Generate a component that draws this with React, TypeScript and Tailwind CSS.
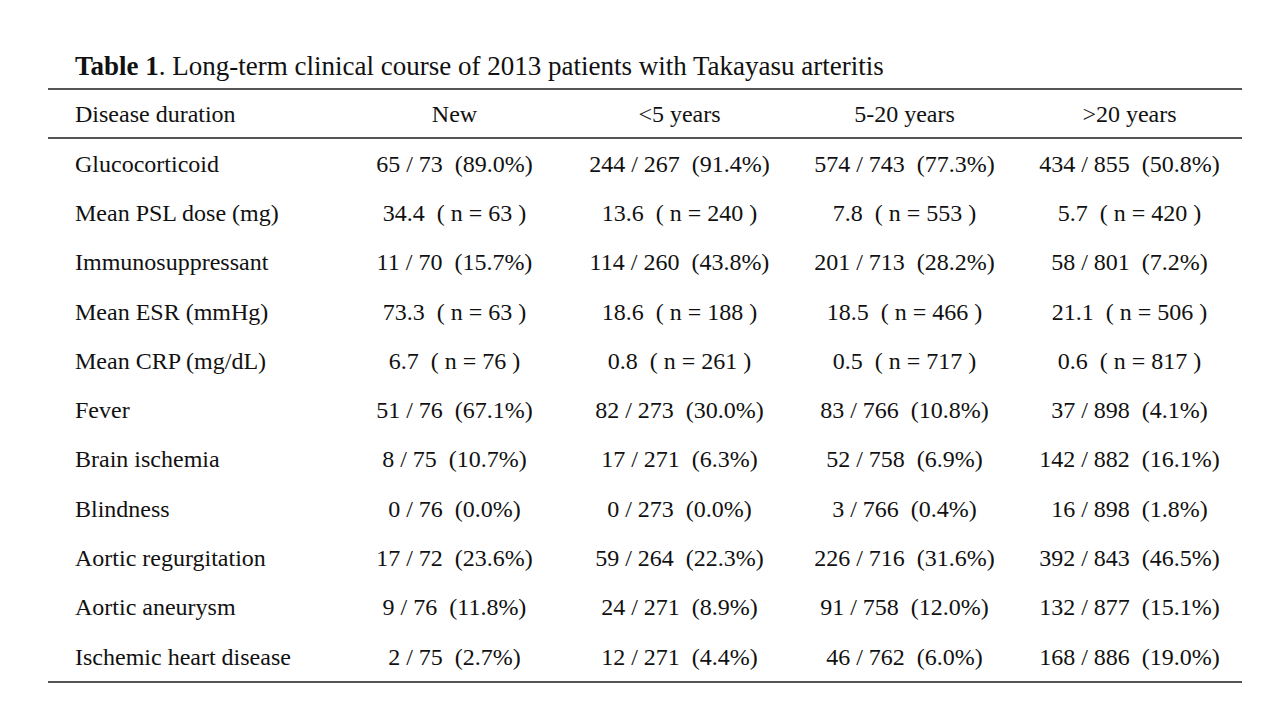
import React from 'react';

type Row = { label: string; cells: string[] };

const headers = ['New', '<5 years', '5-20 years', '>20 years'];

const rows: Row[] = [
  { label: 'Glucocorticoid', cells: ['65 / 73  (89.0%)', '244 / 267  (91.4%)', '574 / 743  (77.3%)', '434 / 855  (50.8%)'] },
  { label: 'Mean PSL dose (mg)', cells: ['34.4  ( n = 63 )', '13.6  ( n = 240 )', '7.8  ( n = 553 )', '5.7  ( n = 420 )'] },
  { label: 'Immunosuppressant', cells: ['11 / 70  (15.7%)', '114 / 260  (43.8%)', '201 / 713  (28.2%)', '58 / 801  (7.2%)'] },
  { label: 'Mean ESR (mmHg)', cells: ['73.3  ( n = 63 )', '18.6  ( n = 188 )', '18.5  ( n = 466 )', '21.1  ( n = 506 )'] },
  { label: 'Mean CRP (mg/dL)', cells: ['6.7  ( n = 76 )', '0.8  ( n = 261 )', '0.5  ( n = 717 )', '0.6  ( n = 817 )'] },
  { label: 'Fever', cells: ['51 / 76  (67.1%)', '82 / 273  (30.0%)', '83 / 766  (10.8%)', '37 / 898  (4.1%)'] },
  { label: 'Brain ischemia', cells: ['8 / 75  (10.7%)', '17 / 271  (6.3%)', '52 / 758  (6.9%)', '142 / 882  (16.1%)'] },
  { label: 'Blindness', cells: ['0 / 76  (0.0%)', '0 / 273  (0.0%)', '3 / 766  (0.4%)', '16 / 898  (1.8%)'] },
  { label: 'Aortic regurgitation', cells: ['17 / 72  (23.6%)', '59 / 264  (22.3%)', '226 / 716  (31.6%)', '392 / 843  (46.5%)'] },
  { label: 'Aortic aneurysm', cells: ['9 / 76  (11.8%)', '24 / 271  (8.9%)', '91 / 758  (12.0%)', '132 / 877  (15.1%)'] },
  { label: 'Ischemic heart disease', cells: ['2 / 75  (2.7%)', '12 / 271  (4.4%)', '46 / 762  (6.0%)', '168 / 886  (19.0%)'] },
];

const App: React.FC = () => {
  return (
    <div
      className="w-[1280px] h-[724px] bg-white text-[#111] pt-[48px] pl-[48px]"
      style={{ fontFamily: '"Liberation Serif", "Times New Roman", serif' }}
    >
      {/* Caption */}
      <div className="pl-[27px] text-[27px] leading-[36px] h-[40px]">
        <span className="font-bold">Table 1</span>. Long-term clinical course of 2013 patients with Takayasu arteritis
      </div>

      <div className="w-[1194px] border-t-2 border-b-2 border-[#555]">
        {/* Header */}
        <div className="grid grid-cols-[294px_225px_225px_225px_225px] h-[49px] items-center border-b-2 border-[#555] text-[24px]">
          <div className="pl-[27px]">Disease duration</div>
          {headers.map((h) => (
            <div key={h} className="text-center">{h}</div>
          ))}
        </div>

        {/* Body */}
        {rows.map((row) => (
          <div
            key={row.label}
            className="grid grid-cols-[294px_225px_225px_225px_225px] h-[49.3px] items-center text-[24px]"
          >
            <div className="pl-[27px]">{row.label}</div>
            {row.cells.map((c, i) => (
              <div key={i} className="text-center whitespace-pre">{c}</div>
            ))}
          </div>
        ))}
      </div>
    </div>
  );
};

export default App;
